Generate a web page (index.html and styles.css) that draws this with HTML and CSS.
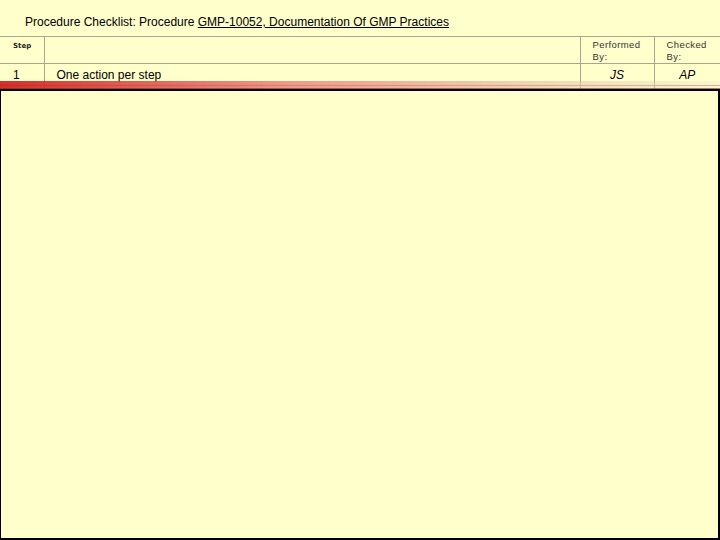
FILE: index.html
```html
<!DOCTYPE html>
<html>
<head>
<meta charset="utf-8">
<link rel="stylesheet" href="styles.css">
</head>
<body>
<div class="page">
  <div class="title">Procedure Checklist: Procedure <span class="link">GMP-10052, Documentation Of GMP Practices</span></div>
  <div class="table-wrap">
    <table class="checklist">
      <colgroup>
        <col class="c-step">
        <col class="c-action">
        <col class="c-perf">
        <col class="c-check">
      </colgroup>
      <tr class="head">
        <th class="step-h">Step</th>
        <th></th>
        <th class="by">Performed<br>By:</th>
        <th class="by">Checked<br>By:</th>
      </tr>
      <tr class="row">
        <td class="num">1</td>
        <td class="action">One action per step</td>
        <td class="init">JS</td>
        <td class="init">AP</td>
      </tr>
      <tr class="tail">
        <td></td><td></td><td></td><td></td>
      </tr>
    </table>
    <div class="fade-bar"></div>
  </div>
  <div class="box"></div>
</div>
</body>
</html>
```

FILE: styles.css
```css
html, body {
  margin: 0;
  padding: 0;
  background: #ffffcc;
}
.page {
  width: 720px;
  height: 540px;
  display: flex;
  flex-direction: column;
  font-family: "Liberation Sans", Arial, sans-serif;
  color: #000;
}
.title {
  height: 36px;
  box-sizing: border-box;
  padding: 15px 0 0 25px;
  font-size: 12px;
  line-height: 14px;
}
.link {
  text-decoration: underline;
}
.table-wrap {
  position: relative;
}
.checklist {
  width: 720px;
  border-collapse: collapse;
  table-layout: fixed;
}
.c-step { width: 44px; }
.c-perf { width: 74px; }
.c-check { width: 66px; }
.checklist th,
.checklist td {
  border: 1px solid #a8a690;
  padding: 0;
  text-align: left;
  vertical-align: top;
  font-weight: normal;
}
.checklist tr > :first-child { border-left: none; }
.checklist tr > :last-child { border-right: none; }
.checklist .head { height: 26px; }
.checklist .step-h {
  font-family: "DejaVu Sans", sans-serif;
  font-size: 7px;
  font-weight: bold;
  padding: 3px 0 0 13px;
  line-height: 12px;
  color: #222;
}
.checklist .by {
  font-size: 9.5px;
  line-height: 12px;
  letter-spacing: 0.4px;
  padding: 2px 0 0 12px;
  color: #333;
}
.checklist .row { height: 22px; }
.checklist .row td {
  font-size: 12px;
  line-height: 14px;
  padding-top: 4px;
}
.checklist .num { padding-left: 13px; }
.checklist .action { padding-left: 12px; }
.checklist .init {
  font-style: italic;
  text-align: center;
}
.checklist .tail { height: 3px; }
.checklist .tail td { border-bottom: none; }
.fade-bar {
  position: absolute;
  left: 0;
  right: 0;
  bottom: 0;
  height: 7px;
  background: linear-gradient(to right, rgba(208, 24, 24, 0.9), rgba(232, 110, 110, 0.7) 40%, rgba(236, 190, 170, 0.5) 80%, rgba(245, 225, 200, 0.3));
  border-bottom: 1px solid rgba(120, 40, 20, 0.6);
}
.box {
  flex: 1;
  border-top: 2px solid #000;
  border-left: 1px solid #000;
  border-right: 2px solid #000;
  border-bottom: 2px solid #000;
  background: #ffffcc;
}
```
